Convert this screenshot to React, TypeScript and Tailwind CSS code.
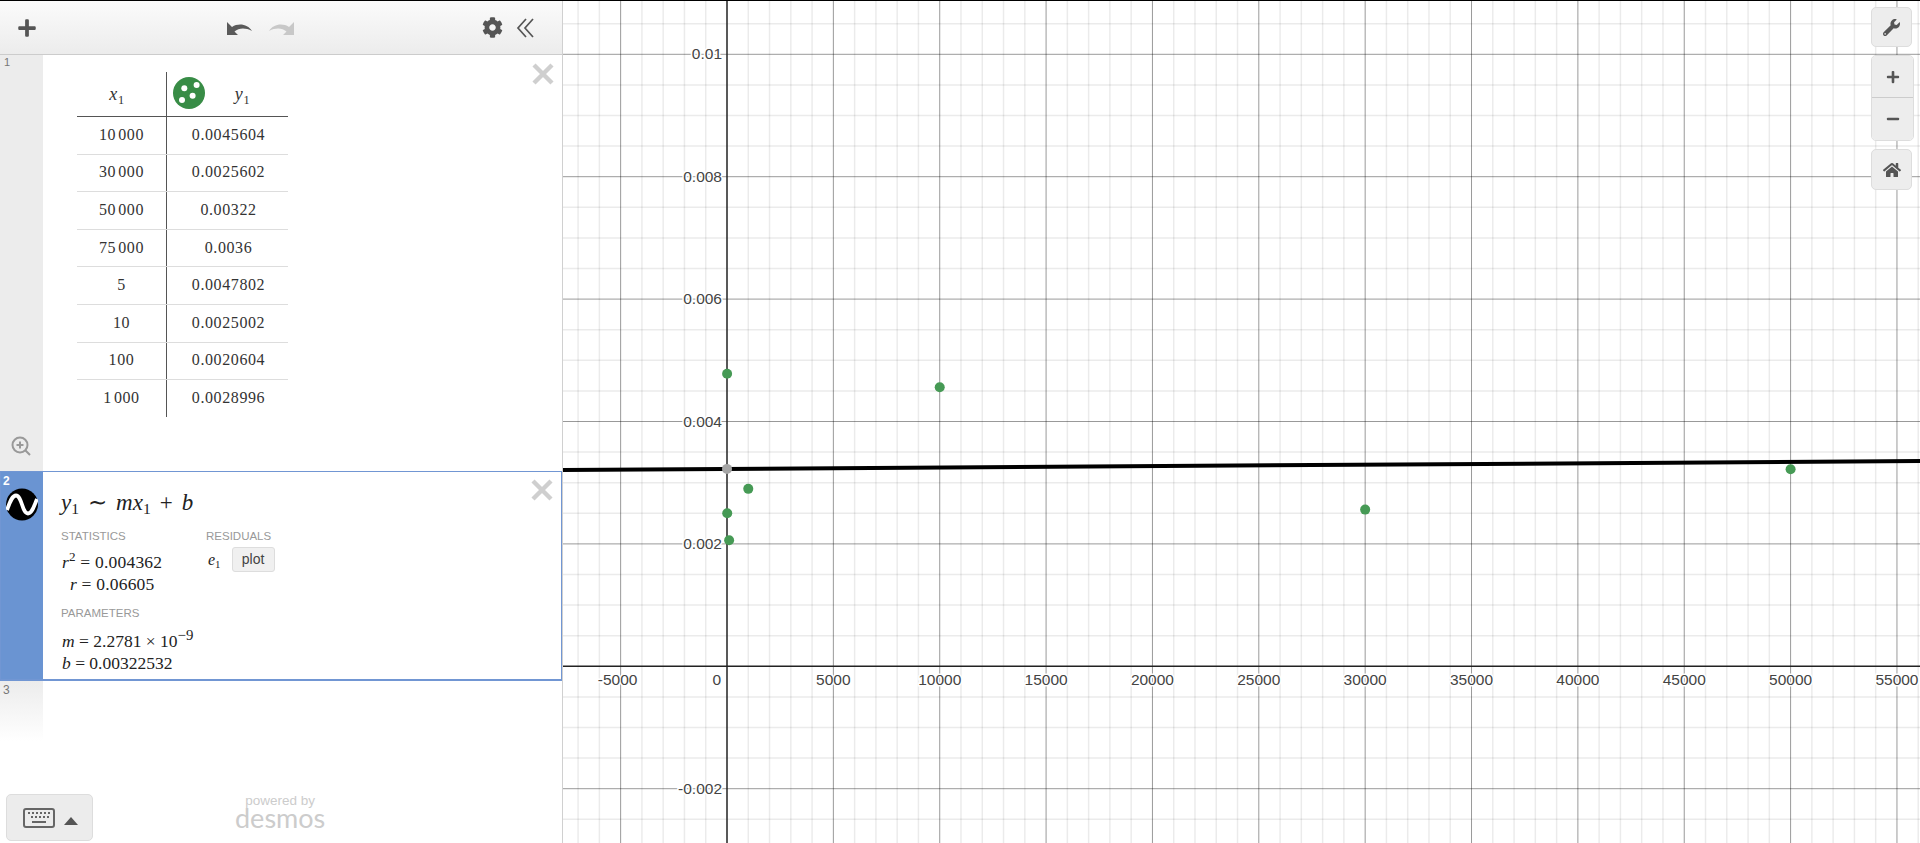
import React from "react";
import { FaCog, FaHome, FaMinus, FaPlus, FaWrench } from "react-icons/fa";

const X0 = 727;
const Y0 = 666.3;
const PX_X = 106.36 / 5000;
const PX_Y = 61200;
const px = (x: number) => X0 + x * PX_X;
const py = (y: number) => Y0 - y * PX_Y;

const points: [number, number][] = [
  [10000, 0.0045604],
  [30000, 0.0025602],
  [50000, 0.00322],
  [75000, 0.0036],
  [5, 0.0047802],
  [10, 0.0025002],
  [100, 0.0020604],
  [1000, 0.0028996],
];

const rows: [React.ReactNode, string][] = [
  [<Thousands a="10" b="000" />, "0.0045604"],
  [<Thousands a="30" b="000" />, "0.0025602"],
  [<Thousands a="50" b="000" />, "0.00322"],
  [<Thousands a="75" b="000" />, "0.0036"],
  ["5", "0.0047802"],
  ["10", "0.0025002"],
  ["100", "0.0020604"],
  [<Thousands a="1" b="000" />, "0.0028996"],
];

function Thousands({ a, b }: { a: string; b: string }) {
  return (
    <span>
      {a}
      <span className="ml-[2px]">{b}</span>
    </span>
  );
}

function V({ n, sub }: { n: string; sub?: string }) {
  return (
    <span>
      <i>{n}</i>
      {sub && <sub className="text-[0.68em] not-italic align-baseline relative top-[0.3em]">{sub}</sub>}
    </span>
  );
}

function Graph() {
  const minorX: number[] = [];
  for (let i = -8; i <= 56; i++) if (i % 5 !== 0) minorX.push(X0 + i * 21.272);
  const minorY: number[] = [];
  for (let i = -7; i <= 22; i++) if (i % 4 !== 0) minorY.push(Y0 - i * 30.6);
  const majorX: number[] = [];
  for (let i = -1; i <= 11; i++) if (i !== 0) majorX.push(X0 + i * 106.36);
  const majorY = [-0.002, 0.002, 0.004, 0.006, 0.008, 0.01];
  const labelX = [-5000, 5000, 10000, 15000, 20000, 25000, 30000, 35000, 40000, 45000, 50000, 55000];
  const lineAt = (x: number) => py(2.2781e-9 * x + 0.00322532);
  const labelClass =
    "fill-[#444] stroke-white stroke-[3px] text-[15.5px] [paint-order:stroke] [font-family:'Liberation_Sans',Arial,sans-serif]";
  return (
    <svg className="block h-full w-full" viewBox="563 1 1357 842">
      {minorX.map((x) => (
        <line key={x} x1={x} x2={x} y1={0} y2={843} stroke="#000" strokeOpacity={0.08} strokeWidth={1.5} />
      ))}
      {minorY.map((y) => (
        <line key={y} x1={563} x2={1920} y1={y} y2={y} stroke="#000" strokeOpacity={0.08} strokeWidth={1.5} />
      ))}
      {majorX.map((x) => (
        <line key={x} x1={x} x2={x} y1={0} y2={843} stroke="#000" strokeOpacity={0.4} />
      ))}
      {majorY.map((v) => (
        <line key={v} x1={563} x2={1920} y1={py(v)} y2={py(v)} stroke="#000" strokeOpacity={0.4} />
      ))}
      <line x1={X0} x2={X0} y1={0} y2={843} stroke="#222" strokeWidth={1.5} />
      <line x1={563} x2={1920} y1={Y0} y2={Y0} stroke="#222" strokeWidth={1.5} />
      {majorY.map((v) => (
        <text key={v} x={722} y={py(v) + 5} textAnchor="end" className={labelClass}>
          {v}
        </text>
      ))}
      {labelX.map((v) => (
        <text key={v} x={px(v) - (v < 0 ? 3 : 0)} y={684.5} textAnchor="middle" className={labelClass}>
          {v}
        </text>
      ))}
      <text x={721} y={684.5} textAnchor="end" className={labelClass}>
        0
      </text>
      <line x1={563} x2={1920} y1={lineAt((563 - X0) / PX_X)} y2={lineAt((1920 - X0) / PX_X)} stroke="#000" strokeWidth={4} />
      <circle cx={X0} cy={py(0.00322532)} r={5} fill="#a5a5a5" />
      {points.map(([x, y]) => (
        <circle key={x} cx={px(x)} cy={py(y)} r={5} fill="#469a55" />
      ))}
    </svg>
  );
}

function MapButton({ children, className }: { children: React.ReactNode; className: string }) {
  return (
    <div className={`flex w-[41px] items-center justify-center bg-[#ededed] text-[#555] ${className}`}>{children}</div>
  );
}

function CloseX({ top }: { top: string }) {
  return (
    <svg className={`absolute right-[8px] ${top}`} width="22" height="22" viewBox="0 0 22 22">
      <path d="M2 2 20 20M20 2 2 20" stroke="#cfcfcf" strokeWidth="4.4" fill="none" />
    </svg>
  );
}

export default function App() {
  return (
    <div className="flex h-[843px] w-full overflow-hidden border-t border-black bg-white [font-family:'Liberation_Sans',Arial,sans-serif]">
      <div className="relative z-10 flex w-[563px] shrink-0 flex-col border-r border-[#d0d0d0] bg-white">
        {/* toolbar */}
        <div className="flex h-[54px] shrink-0 items-center border-b border-[#ccc] bg-gradient-to-b from-[#fbfbfb] to-[#ececec] text-[#555]">
          <div className="ml-[17px] w-[20px]">
            <FaPlus size={20} />
          </div>
          <div className="ml-[190px] flex gap-[17px]">
            <svg width="25" height="14" viewBox="0 0 25 14">
              <path d="M0 1v13h11l-3.500-3.500C12 7 18 6.500 25 10 21 3.500 12 1.500 5 6z" fill="#5a5a5a" />
            </svg>
            <svg width="25" height="14" viewBox="0 0 25 14">
              <path d="M25 1v13H14l3.500-3.500C13 7 7 6.500 0 10 4 3.500 13 1.500 20 6z" fill="#c8c8c8" />
            </svg>
          </div>
          <div className="ml-[188px] w-[22px]">
            <FaCog size={21} />
          </div>
          <svg className="ml-[12px]" width="19" height="20" viewBox="0 0 19 20">
            <path d="M10 1 2 10l8 9M17 1 9 10l8 9" fill="none" stroke="#555" strokeWidth="1.700" />
          </svg>
        </div>

        {/* table row */}
        <div className="relative flex h-[416px] shrink-0">
          <div className="flex w-[43px] shrink-0 flex-col justify-between bg-[#ececec] pb-[14px] pl-[4px] text-[11px] leading-[14px] text-[#777]">
            <span>1</span>
            <svg className="ml-[6px]" width="22" height="22" viewBox="0 0 22 22" fill="none" stroke="#999" strokeWidth="2">
              <circle cx="10" cy="10" r="7.500" />
              <path d="M15.500 15.500 20 20M10 6.500v7M6.500 10h7" />
            </svg>
          </div>
          <div className="ml-[34px] mt-[17px] w-[211px] [font-family:'Liberation_Serif',serif] text-[16px] tracking-[0.6px] text-[#333]">
            <div className="flex h-[45px] border-b border-[#555]">
              <div className="flex w-[90px] items-center justify-center border-r border-[#555] pr-[9px] pt-[1px] text-[18px]">
                <V n="x" sub="1" />
              </div>
              <div className="relative flex flex-1 items-center justify-center pl-[30px] pt-[1px] text-[18px]">
                <svg className="absolute left-[6px] top-[5px]" width="32" height="32" viewBox="0 0 32 32">
                  <circle cx="16" cy="16" r="16" fill="#388c46" />
                  <circle cx="11.300" cy="11.300" r="3" fill="#fff" />
                  <circle cx="23.600" cy="8" r="3" fill="#fff" />
                  <circle cx="9" cy="23" r="3" fill="#fff" />
                  <circle cx="19.600" cy="18.700" r="3" fill="#fff" />
                </svg>
                <V n="y" sub="1" />
              </div>
            </div>
            {rows.map(([a, b], i) => (
              <div key={i} className={i < rows.length - 1 ? "flex h-[37.600px] border-b border-[#ddd]" : "flex h-[37px]"}>
                <div className="flex w-[90px] items-center justify-center border-r border-[#555] pb-[1px]">{a}</div>
                <div className="flex flex-1 items-center justify-center pb-[1px] pl-[2px]">{b}</div>
              </div>
            ))}
          </div>
          <CloseX top="top-[8px]" />
        </div>

        {/* regression row */}
        <div className="relative flex h-[210px] shrink-0 border border-b-2 border-[#7196d3]">
          <div className="w-[42px] shrink-0 bg-[#6a94d2] pl-[2px] pt-[1px] text-[12px] font-bold leading-[16px] text-white">
            <div>2</div>
            <svg className="ml-[3px] mt-[-1px]" width="32" height="33" viewBox="0 0 32 33">
              <circle cx="16" cy="16.500" r="16" fill="#000" />
              <path d="M1 22C4 14 6 7.500 10 7.500 16 7.500 16 25.500 22 25.500 26 25.500 28 18 31 11" fill="none" stroke="#fff" strokeWidth="3.800" />
            </svg>
          </div>
          <div className="flex-1 pl-[18px] [font-family:'Liberation_Serif',serif] text-[#222]">
            <div className="mt-[16px] flex h-[30px] items-center gap-[9px] text-[23px]">
              <V n="y" sub="1" />
              <span>∼</span>
              <span>
                <i>m</i>
                <V n="x" sub="1" />
              </span>
              <span>+</span>
              <i>b</i>
            </div>
            <div className="mt-[11px] flex">
              <div className="w-[145px]">
                <Caption>STATISTICS</Caption>
                <div className="mt-[8px] pl-[1px] text-[17.500px] leading-[22px] tracking-[0.2px]">
                  <i>r</i>
                  <sup className="text-[0.75em]">2</sup> = 0.004362
                </div>
                <div className="pl-[9px] text-[17.500px] leading-[22px] tracking-[0.2px]">
                  <i>r</i> = 0.06605
                </div>
              </div>
              <div>
                <Caption>RESIDUALS</Caption>
                <div className="mt-[4px] flex items-center gap-[11px] pl-[2px] text-[16px]">
                  <V n="e" sub="1" />
                  <div className="flex h-[25px] w-[43px] items-center justify-center rounded-[3px] border border-[#ddd] bg-[#f0f0f0] [font-family:'Liberation_Sans',sans-serif] text-[14px] text-[#444]">
                    plot
                  </div>
                </div>
              </div>
            </div>
            <div className="mt-[11px]">
              <Caption>PARAMETERS</Caption>
            </div>
            <div className="mt-[10px] pl-[1px] text-[17.500px] leading-[22px]">
              <i>m</i> = 2.2781 × 10
              <sup className="text-[0.85em]">−9</sup>
            </div>
            <div className="pl-[1px] text-[17.500px] leading-[22px]">
              <i>b</i> = 0.00322532
            </div>
          </div>
          <CloseX top="top-[7px]" />
        </div>

        {/* empty row + footer */}
        <div className="flex flex-1 flex-col">
          <div className="h-[60px] w-[43px] bg-gradient-to-b from-[#ececec] to-white pl-[3px] text-[12px] text-[#777]">3</div>
          <div className="mt-auto flex items-end pb-[2px] pl-[6px]">
            <div className="flex h-[47px] w-[87px] items-center gap-[9px] rounded-[5px] border border-[#ddd] bg-[#ececec] pl-[16px]">
              <svg width="32" height="20" viewBox="0 0 32 20">
                <rect x="1" y="1" width="30" height="18" rx="2" fill="none" stroke="#666" strokeWidth="2" />
                <path d="M5 5h2M9 5h2M13 5h2M17 5h2M21 5h2M25 5h2M8 9h2M12 9h2M16 9h2M20 9h2M24 9h2" stroke="#666" strokeWidth="2" />
                <path d="M9 14h14" stroke="#666" strokeWidth="2" />
              </svg>
              <svg className="mt-[6px]" width="14" height="8" viewBox="0 0 14 8">
                <path d="M7 0 14 8H0z" fill="#555" />
              </svg>
            </div>
            <div className="mb-[13px] ml-[142px] flex flex-col items-center text-[#ccc]">
              <span className="text-[13.500px] leading-[13px]">powered by</span>
              <span className="text-[27px] leading-[21px] [font-family:Lato,sans-serif]">desmos</span>
            </div>
          </div>
        </div>
      </div>

      {/* graph */}
      <div className="relative min-w-0 flex-1">
        <Graph />
        <div className="absolute right-[6px] top-[6px] flex flex-col gap-[8px]">
          <MapButton className="h-[40px] rounded-[5px] border border-[#ddd]">
            <FaWrench size={17} />
          </MapButton>
          <div className="overflow-hidden rounded-[5px] border border-[#ddd]">
            <MapButton className="h-[42px] border-b border-[#ccc]">
              <FaPlus size={14} />
            </MapButton>
            <MapButton className="h-[42px]">
              <FaMinus size={14} />
            </MapButton>
          </div>
          <MapButton className="h-[41px] rounded-[5px] border border-[#ddd]">
            <FaHome size={18} />
          </MapButton>
        </div>
      </div>
    </div>
  );
}

function Caption({ children }: { children: React.ReactNode }) {
  return <div className="[font-family:'Liberation_Sans',sans-serif] text-[11.500px] leading-[14px] text-[#999]">{children}</div>;
}
